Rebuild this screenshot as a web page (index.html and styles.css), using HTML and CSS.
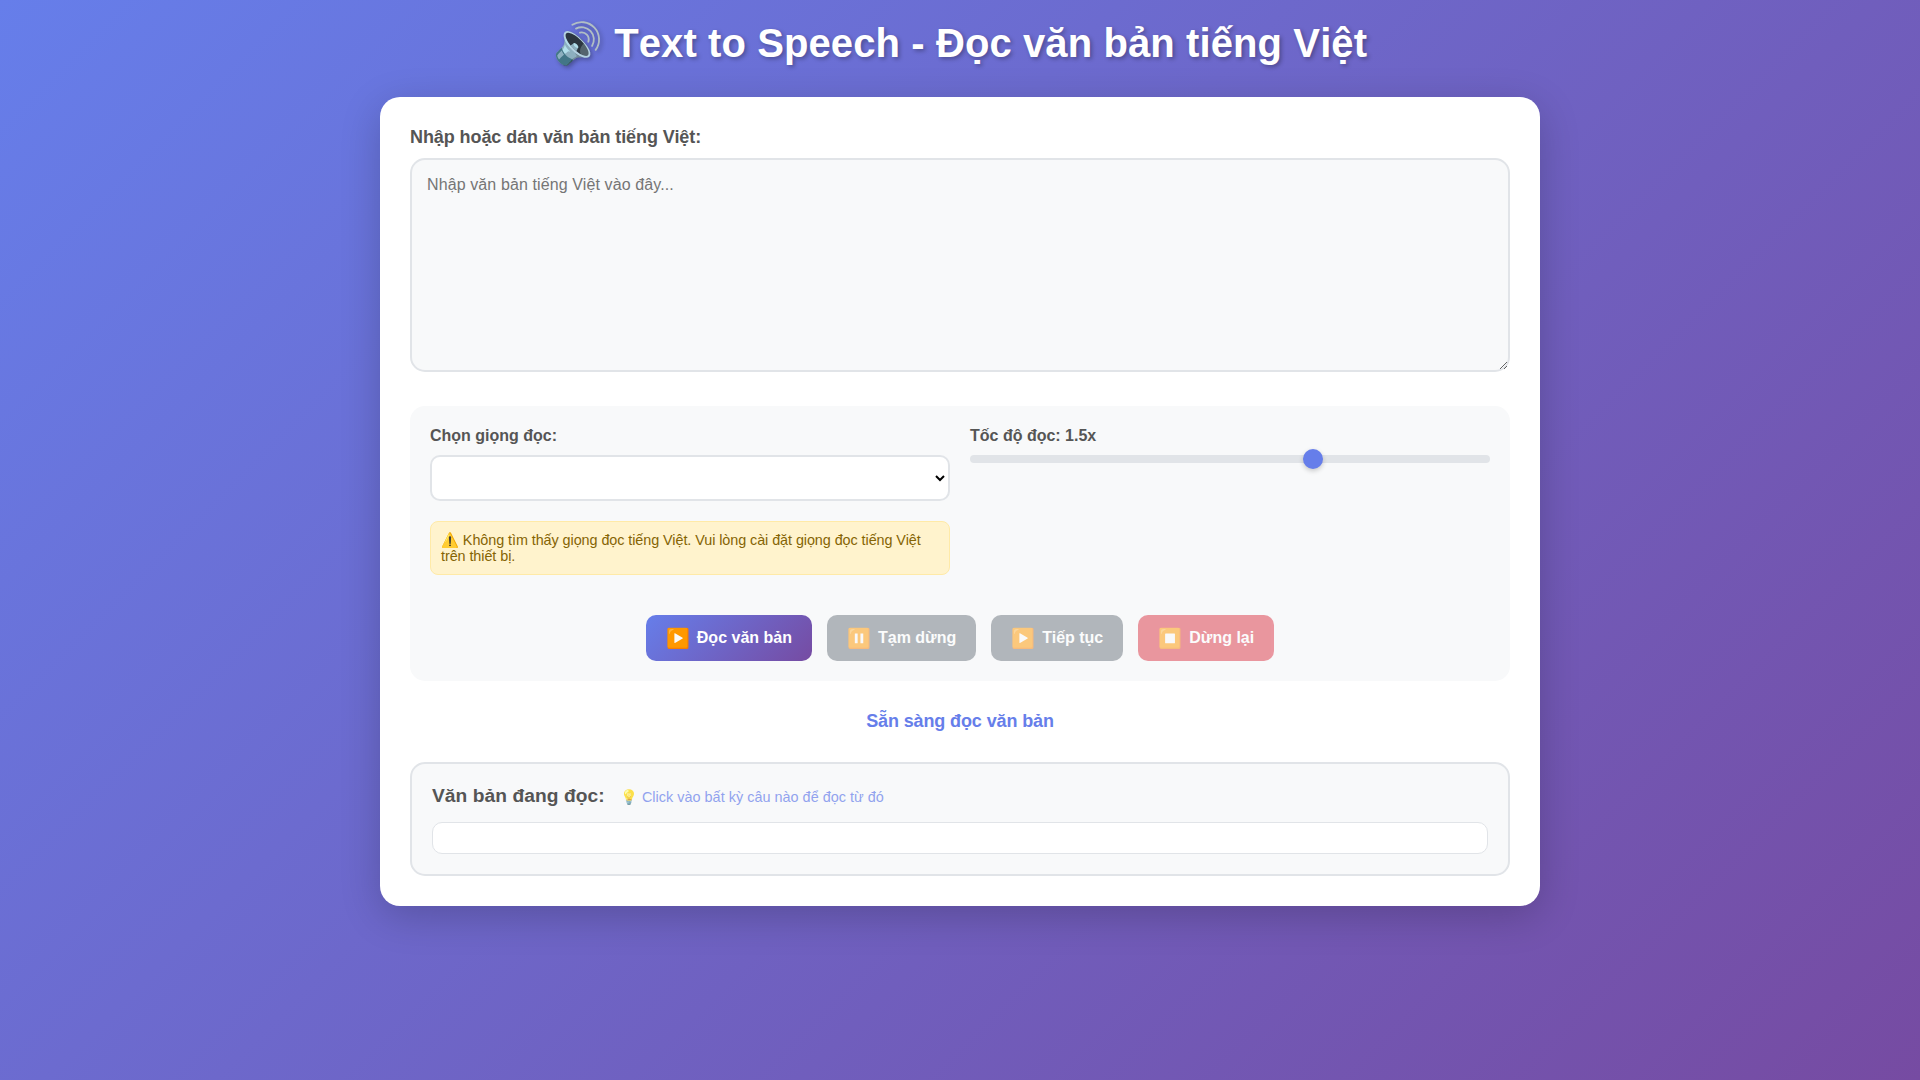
FILE: index.html
```html
<!DOCTYPE html>
<html lang="vi">
<head>
    <meta charset="utf-8">
    <title>Text to Speech - Đọc văn bản tiếng Việt</title>
    <link rel="stylesheet" href="styles.css">
</head>

<body>
    <h1 class="title">🔊 Text to Speech - Đọc văn bản tiếng Việt</h1>

    <div class="container">
        <div class="input-group">
            <label class="input-label" for="text-input">Nhập hoặc dán văn bản tiếng Việt:</label>
            <textarea class="text-input" id="text-input" placeholder="Nhập văn bản tiếng Việt vào đây..."></textarea>
        </div>

        <div class="controls">
            <div class="controls-grid">
                <div class="control-item">
                    <label class="control-label" for="voice">Chọn giọng đọc:</label>
                    <select class="voice-select" id="voice"></select>
                    <div class="voice-warning">⚠️ Không tìm thấy giọng đọc tiếng Việt. Vui lòng cài đặt giọng đọc tiếng Việt trên thiết bị.</div>
                </div>
                <div class="control-item">
                    <label class="control-label" for="rate">Tốc độ đọc: 1.5x</label>
                    <input class="rate-slider" id="rate" type="range" min="0.5" max="2" step="0.1" value="1.5">
                </div>
            </div>

            <div class="buttons">
                <button class="btn btn-play"><span class="btn-icon">▶️</span>Đọc văn bản</button>
                <button class="btn btn-gray" disabled><span class="btn-icon">⏸️</span>Tạm dừng</button>
                <button class="btn btn-gray" disabled><span class="btn-icon">▶️</span>Tiếp tục</button>
                <button class="btn btn-stop" disabled><span class="btn-icon">⏹️</span>Dừng lại</button>
            </div>
        </div>

        <div class="status">Sẵn sàng đọc văn bản</div>

        <div class="reading">
            <div class="reading-head">
                <h3 class="reading-title">Văn bản đang đọc:</h3>
                <span class="reading-hint">💡 Click vào bất kỳ câu nào để đọc từ đó</span>
            </div>
            <div class="reading-text"></div>
        </div>
    </div>
</body>
</html>
```

FILE: styles.css
```css
* {
    box-sizing: border-box;
    margin: 0;
    padding: 0;
}

body {
    min-height: 100vh;
    padding: 20px;
    font-family: "Liberation Sans", Arial, sans-serif;
    background: linear-gradient(135deg, #667eea 0%, #764ba2 100%);
}

.title {
    margin-bottom: 30px;
    color: #fff;
    font-size: 40px;
    font-kerning: none;
    letter-spacing: 0.1px;
    text-align: center;
    text-shadow: 2px 2px 4px rgba(0, 0, 0, 0.3);
}

.container {
    width: 1160px;
    margin: 0 auto;
    padding: 30px;
    background: #fff;
    border-radius: 20px;
    box-shadow: 0 10px 40px rgba(0, 0, 0, 0.2);
}

.input-group {
    margin-bottom: 34px;
}

.input-label {
    display: block;
    margin-bottom: 10px;
    color: #555;
    font-size: 18px;
    font-weight: bold;
    letter-spacing: -0.08px;
}

.text-input {
    display: block;
    width: 100%;
    height: 214px;
    padding: 16px 15px;
    border: 2px solid #e1e4e8;
    border-radius: 15px;
    background: #f8f9fa;
    font-family: inherit;
    font-size: 16px;
    outline: none;
}

.text-input::placeholder {
    letter-spacing: 0.11px;
}

.controls {
    padding: 20px;
    background: #f8f9fa;
    border-radius: 15px;
}

.controls-grid {
    display: grid;
    grid-template-columns: 1fr 1fr;
    gap: 20px;
    margin-bottom: 40px;
}

.control-label {
    display: block;
    margin-bottom: 10px;
    color: #555;
    font-size: 16px;
    font-weight: bold;
    line-height: 19px;
}

.voice-select {
    display: block;
    width: 100%;
    height: 46px;
    padding: 12px;
    border: 2px solid #e1e4e8;
    border-radius: 10px;
    background: #fff;
    font-family: inherit;
    font-size: 16px;
}

.voice-warning {
    margin-top: 20px;
    padding: 10px;
    border: 1px solid #ffeaa7;
    border-radius: 8px;
    background: #fff3cd;
    color: #856404;
    font-size: 14.4px;
    letter-spacing: -0.07px;
    line-height: 16px;
}

.rate-slider {
    display: block;
    width: 100%;
    height: 8px;
    border-radius: 5px;
    background: #e1e4e8;
    outline: none;
    appearance: none;
    -webkit-appearance: none;
}

.rate-slider::-webkit-slider-thumb {
    width: 20px;
    height: 20px;
    border-radius: 50%;
    background: #667eea;
    box-shadow: 0 2px 5px rgba(0, 0, 0, 0.2);
    -webkit-appearance: none;
}

.buttons {
    display: flex;
    justify-content: center;
    gap: 15px;
}

.btn {
    display: flex;
    align-items: center;
    gap: 7px;
    height: 46px;
    padding: 0 20px;
    border: none;
    border-radius: 10px;
    color: #fff;
    font-family: inherit;
    font-size: 16px;
    font-weight: bold;
}

.btn-icon {
    font-size: 19.2px;
}

.btn:disabled {
    opacity: 0.5;
}

.btn-play {
    background: linear-gradient(135deg, #667eea 0%, #764ba2 100%);
}

.btn-gray {
    background: #6c757d;
}

.btn-stop {
    background: #dc3545;
}

.status {
    margin: 30px 0;
    color: #667eea;
    font-size: 18px;
    font-weight: bold;
    letter-spacing: -0.12px;
    text-align: center;
}

.reading {
    padding: 20px;
    border: 2px solid #e1e4e8;
    border-radius: 15px;
    background: #f8f9fa;
}

.reading-head {
    display: flex;
    align-items: baseline;
    gap: 15px;
    margin-bottom: 15px;
}

.reading-title {
    color: #555;
    font-size: 19.2px;
    letter-spacing: 0.07px;
    line-height: 23px;
}

.reading-hint {
    color: #667eea;
    font-size: 14.4px;
    letter-spacing: 0.03px;
    opacity: 0.7;
}

.reading-text {
    height: 32px;
    border: 1px solid #e1e4e8;
    border-radius: 10px;
    background: #fff;
}
```
